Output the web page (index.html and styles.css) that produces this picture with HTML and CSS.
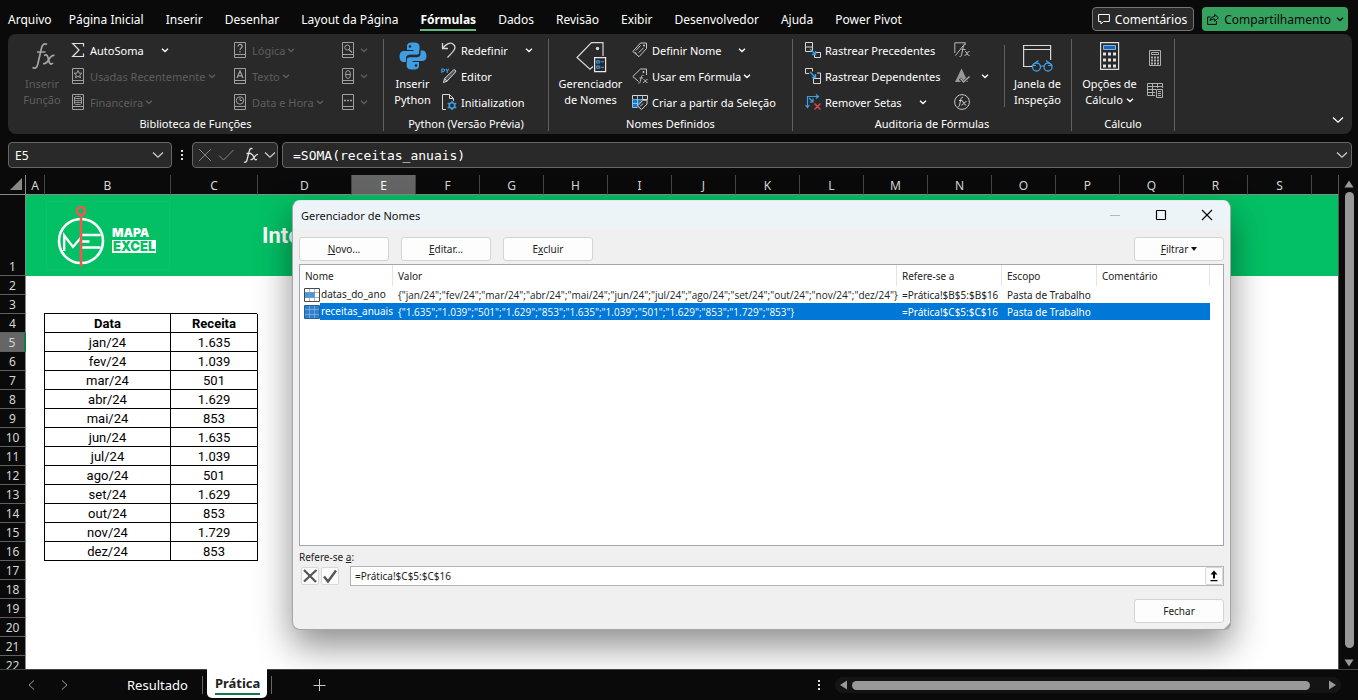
FILE: index.html
```html
<!DOCTYPE html>
<html lang="pt-BR">
<head>
    <meta charset="UTF-8">
    <meta name="viewport" content="width=device-width, initial-scale=1.0">
    <title>Gerenciador de Nomes</title>
    <link rel="stylesheet" href="styles.css">
</head>
<body>
    <svg class="defs" aria-hidden="true">
        <symbol id="chev" viewBox="0 0 8 8"><path d="M1 2.8l3 2.7 3-2.7" fill="none" stroke="currentColor" stroke-width="1.4"/></symbol>
        <symbol id="chev-lg" viewBox="0 0 12 12"><path d="M1 3.5l5 4.7 5-4.7" fill="none" stroke="currentColor" stroke-width="1.3"/></symbol>
        <symbol id="book" viewBox="0 0 16 16"><path d="M2.5.5h11v15h-11zM2.5 12.5h11" fill="none" stroke="currentColor"/></symbol>
        <symbol id="grid-icon" viewBox="0 0 16 14">
            <path d="M.5.5h15v13H.5z" fill="#fff"/>
            <path d="M1 4h10v6H1z" fill="#3d9be6"/>
            <path d="M1 4.500h14M1 9.500h14M5.500 1v12M10.500 1v12" stroke="#8d99a5" stroke-width=".7"/>
            <path d="M.5.5h15v13H.5z" fill="none" stroke="#4a4a4a"/>
        </symbol>
        <symbol id="grid-icon-sel" viewBox="0 0 16 14">
            <path d="M.5.5h15v13H.5z" fill="#2f80cc" stroke="#2b5f93"/>
            <path d="M1 4.500h14M1 9.500h14M5.500 1v12M10.500 1v12" stroke="#7fb0dd" stroke-width=".8"/>
        </symbol>
    </svg>

    <header class="topbar">
        <nav class="tabs">
            <a href="#" class="file">Arquivo</a>
            <a href="#">Página Inicial</a>
            <a href="#">Inserir</a>
            <a href="#">Desenhar</a>
            <a href="#">Layout da Página</a>
            <a href="#" class="active">Fórmulas</a>
            <a href="#">Dados</a>
            <a href="#">Revisão</a>
            <a href="#">Exibir</a>
            <a href="#">Desenvolvedor</a>
            <a href="#">Ajuda</a>
            <a href="#">Power Pivot</a>
        </nav>
        <div class="actions">
            <button class="comments"><svg class="i12" viewBox="0 0 12 12"><path d="M.6 1.500h10.800v7H5.500L3 11V8.500H.6z" fill="none" stroke="currentColor"/></svg>Comentários</button>
            <button class="share"><svg class="i12" viewBox="0 0 12 12"><path d="M3.500 4H.6v7.400h8.800V8M3 8c.4-3 2.200-4.400 4.700-4.400V1.400l3.700 3.400-3.700 3.300V6C5.700 6 4.300 6.500 3 8z" fill="none" stroke="currentColor"/></svg>Compartilhamento<svg class="i8"><use href="#chev"/></svg></button>
        </div>
    </header>

    <section class="ribbon">
        <div class="group library">
            <div class="tools">
                <button class="big off">
                    <svg class="i28" viewBox="0 0 28 28"><path d="M19 2.500c-2.500-1.600-4.600-.2-5.500 3.500L9.700 22.500C9 25.500 7.200 27 4.500 25.500M9 10h8.500M16 13.500c3-1.700 3.600 0 4.500 4s2 6 4.500 3.500M26.500 13.500c-3-.8-4.500 2-6 4.500-1.500 2.700-3 4.300-5.500 3.500" fill="none" stroke="#a5a5a5" stroke-width="1.700"/></svg>
                    <span>Inserir<br>Função</span>
                </button>
                <div class="col c1">
                    <button class="split"><svg class="i16" viewBox="0 0 16 16"><path d="M13.500 4.500V1.500H2.700L9 8l-6.300 6.500h10.800v-3" fill="none" stroke="#e0e0e0" stroke-width="1.200"/></svg>AutoSoma<svg class="i8"><use href="#chev"/></svg></button>
                    <button class="off"><svg class="i16" viewBox="0 0 16 16"><use href="#book"/><path d="M8 2.500l1.100 2.600 2.800.2-2.200 1.700.8 2.800L8 8.300 5.500 9.800l.8-2.800-2.200-1.700 2.800-.2z" fill="none" stroke="currentColor"/></svg><span>Usadas Recentemente</span><svg class="i8 dim"><use href="#chev"/></svg></button>
                    <button class="off"><svg class="i16" viewBox="0 0 16 16"><use href="#book"/><path d="M4.500 3.500C4.500 2 11.500 2 11.500 3.500v6c0 1.500-7 1.500-7 0zM4.500 3.500c0 1.500 7 1.500 7 0M4.500 5.500c0 1.500 7 1.500 7 0M4.500 7.500c0 1.500 7 1.500 7 0" fill="none" stroke="currentColor"/></svg><span>Financeira</span><svg class="i8 dim"><use href="#chev"/></svg></button>
                </div>
                <div class="col c2">
                    <button class="off"><svg class="i16" viewBox="0 0 16 16"><use href="#book"/><path d="M6 4.500c0-3 4.300-2.500 4.200 0C10.200 6 8 6 8 8M8 9v1.500" fill="none" stroke="currentColor" stroke-width="1.200"/></svg><span>Lógica</span><svg class="i8 dim"><use href="#chev"/></svg></button>
                    <button class="off"><svg class="i16" viewBox="0 0 16 16"><use href="#book"/><path d="M5 10l3-7 3 7M6 7.800h4" fill="none" stroke="currentColor" stroke-width="1.300"/></svg><span>Texto</span><svg class="i8 dim"><use href="#chev"/></svg></button>
                    <button class="off"><svg class="i16" viewBox="0 0 16 16"><use href="#book"/><circle cx="8" cy="6.500" r="3.700" fill="none" stroke="currentColor"/><path d="M8 4v2.500h2.200" fill="none" stroke="currentColor"/></svg><span>Data e Hora</span><svg class="i8 dim"><use href="#chev"/></svg></button>
                </div>
                <div class="col c3">
                    <button class="off" aria-label="Pesquisa e Referência"><svg class="i16" viewBox="0 0 16 16"><use href="#book"/><circle cx="7.300" cy="5.500" r="2.500" fill="none" stroke="currentColor"/><path d="M9 7.500l3 3" stroke="currentColor" stroke-width="1.200"/></svg><svg class="i8 dim"><use href="#chev"/></svg></button>
                    <button class="off" aria-label="Matemática"><svg class="i16" viewBox="0 0 16 16"><use href="#book"/><ellipse cx="8" cy="6.500" rx="2.500" ry="4" fill="none" stroke="currentColor"/><path d="M5.500 6.500h5" stroke="currentColor"/></svg><svg class="i8 dim"><use href="#chev"/></svg></button>
                    <button class="off" aria-label="Mais Funções"><svg class="i16" viewBox="0 0 16 16"><use href="#book"/><path d="M4 6.500h2M7 6.500h2M10 6.500h2" stroke="currentColor" stroke-width="1.500"/></svg><svg class="i8 dim"><use href="#chev"/></svg></button>
                </div>
            </div>
            <div class="caption">Biblioteca de Funções</div>
        </div>

        <div class="group python">
            <div class="tools">
                <button class="big">
                    <svg class="i28" viewBox="0 0 28 28"><path d="M14 .5c-5 0-6 1.500-6 4V8h6.500v1H5C2 9 .5 11 .5 14.500S2 20 4.500 20H7v-3.500C7 14 8.500 13 11 13h6.500c2 0 3-1.300 3-3V4.500c0-2.500-1.500-4-6.500-4z" fill="#3f9ee2"/><path d="M14 27.500c5 0 6-1.500 6-4V20h-6.500v-1H23c3 0 4.500-1.500 4.500-5S26 8.500 23.500 8.500h-2V12c0 2.500-1.500 3.200-4 3.200H11c-2 0-3.300 1-3.300 3v5.300c0 2.500 1.300 4 6.300 4z" fill="#3f9ee2"/><circle cx="11" cy="4.500" r="1.300" fill="#292929"/><circle cx="17" cy="23.500" r="1.300" fill="#292929"/><path d="M7.500 20v-3.500c0-2.300 1.400-3.400 3.500-3.400h6.500c2 0 3.300-1.200 3.300-3.100V8" fill="none" stroke="#292929" stroke-width=".9"/></svg>
                    <span>Inserir<br>Python</span>
                </button>
                <div class="col">
                    <button class="split"><svg class="i16" viewBox="0 0 16 16"><path d="M1.500 1v5.500H7M1.800 6.200C5 2 9.500-.5 12.500 2.500c3.500 3.300.5 6.500-6 13" fill="none" stroke="#d8d8d8" stroke-width="1.300"/></svg>Redefinir<svg class="i8"><use href="#chev"/></svg></button>
                    <button><svg class="i16" viewBox="0 0 16 16"><path d="M.8 5V1h1.600c1.500 0 1.500 2.200 0 2.200H1M4.800.8l1.500 2L7.800.8M6.300 2.800V5" fill="none" stroke="#3f9ee2" stroke-width="1.100"/><path d="M2.500 14.500l1-4L12.500 2c1-1 3 .8 2 2L6 13.200zM3.500 10.500L6 13.200" fill="#555" stroke="#d8d8d8"/></svg>Editor</button>
                    <button><svg class="i16" viewBox="0 0 16 16"><path d="M5 15.500H1.500V.5h7l4 4V7M8.500.5v4h4" fill="none" stroke="#d8d8d8"/><circle cx="11" cy="11.500" r="2.700" fill="none" stroke="#3f9ee2" stroke-width="1.600"/><path d="M11 7v2M11 14v2M6.800 9.200l1.700 1M13.500 12.800l1.700 1M6.800 13.800l1.700-1M13.500 10.200l1.700-1" stroke="#3f9ee2" stroke-width="1.500"/></svg>Initialization</button>
                </div>
            </div>
            <div class="caption">Python (Versão Prévia)</div>
        </div>

        <div class="group names">
            <div class="tools">
                <button class="big">
                    <svg class="i30" viewBox="0 0 30 30"><path d="M17 24.500l-3 2.800L1 15.500 15.500.7H27V14" fill="none" stroke="#d8d8d8" stroke-width="1.200"/><circle cx="21.500" cy="6.500" r="1.700" fill="#d8d8d8"/><path d="M18.600 15.600h11v14h-11z" fill="#292929" stroke="#e8e8e8" stroke-width="1.200"/><path d="M20.700 18.700h2.500v2.300h-2.500zM20.700 24h2.500v2.300h-2.500zM24.500 19.800h3.500M24.500 25.200h3.500" fill="none" stroke="#3f9ee2" stroke-width="1.100"/></svg>
                    <span>Gerenciador<br>de Nomes</span>
                </button>
                <div class="col">
                    <button class="split"><svg class="i16" viewBox="0 0 16 16"><path d="M.8 9.500L8.500 1h6v5.500L7 14.700zM4 8.500l4.500-5M6.500 10.800l5-5M2.500 9.800l2 2" fill="none" stroke="#c8c8c8"/><circle cx="12" cy="3.500" r=".9" fill="#ddd"/></svg>Definir Nome<svg class="i8"><use href="#chev"/></svg></button>
                    <button><svg class="i16" viewBox="0 0 16 16"><path d="M6.500 13.500L.8 8.500 8.500 1h6v6" fill="none" stroke="#c8c8c8"/><circle cx="11.500" cy="4" r=".9" fill="#ddd"/><path d="M11.500 7.500c-1.500-.8-2 .5-2.500 3l-.7 3c-.3 1.500-1 2-2 1.500M7.500 10h3.500M11.500 11.500c2-.5 1.500 3.500 4 3M15.500 11.500c-2-.5-2.500 3.500-4.500 3" fill="none" stroke="#b8b8b8"/></svg>Usar em Fórmula<svg class="i8"><use href="#chev"/></svg></button>
                    <button><svg class="i16" viewBox="0 0 16 16"><path d="M.5 1.500h15v4H.5z" fill="none" stroke="#d8d8d8"/><path d="M.5 5.500h10v4h-4v4h-6z" fill="#1c74c4"/><path d="M.5 5.500v8h5M.5 9.500h6M5.500 1.500v10M10.500 1.500v4" fill="none" stroke="#8fc0ec"/><path d="M5.500 12L11 6.200h4v4L9.500 15.500z" fill="#292929" stroke="#d8d8d8"/><path d="M8 12.500l3-3" stroke="#d8d8d8"/></svg>Criar a partir da Seleção</button>
                </div>
            </div>
            <div class="caption">Nomes Definidos</div>
        </div>

        <div class="group audit">
            <div class="tools">
                <div class="col c1">
                    <button><svg class="i16" viewBox="0 0 16 16"><path d="M.5.5h7v9h-7zM.5 5h7M11 10.500h4.500v5H9.500v-2.500" fill="none" stroke="#d8d8d8"/><path d="M5 7l5.500 5.500M10.500 9v3.500H7" fill="none" stroke="#3f9ee2" stroke-width="1.400"/></svg>Rastrear Precedentes</button>
                    <button><svg class="i16" viewBox="0 0 16 16"><path d="M.5 5.500v-5h7v3M.5 5.500H4M12 5h3.500v10.500h-7v-5h7" fill="none" stroke="#d8d8d8"/><path d="M5 4l5.500 5.500M10.500 6v3.500H7" fill="none" stroke="#3f9ee2" stroke-width="1.400"/></svg>Rastrear Dependentes</button>
                    <button class="split"><svg class="i16" viewBox="0 0 16 16"><path d="M2.500 13V2.500H13M11 .5l2.500 2-2.500 2M.5 11l2 2.500 2-2.500M4 4l4 4M8 4.500V8H4.500" fill="none" stroke="#3f9ee2" stroke-width="1.200"/><path d="M9.500 9.500l6 6M15.500 9.500l-6 6" stroke="#d9484d" stroke-width="1.500"/></svg>Remover Setas<svg class="i8"><use href="#chev"/></svg></button>
                </div>
                <div class="col c2">
                    <button aria-label="Mostrar Fórmulas"><svg class="i16" viewBox="0 0 16 16"><path d="M.8 11V.8h10.700L1.500 13.500M12 2.500c-1.500-.8-2.300.3-3 3.500l-1.500 7c-.3 1.500-1 2-2 1.500M7.500 7.500h4M11 9.500c2.500-.5 1.500 4.500 4.500 4M15.500 9.500c-2-.5-3 4.500-5 4" fill="none" stroke="#b8b8b8"/></svg></button>
                    <button aria-label="Verificação de Erros"><svg class="i16" viewBox="0 0 16 16"><path d="M7.500.5L14 14H1z" fill="#999"/><path d="M6 10.500l3.500 4 6-6" fill="none" stroke="#292929" stroke-width="3"/><path d="M6.500 10.500l3.200 3.500 5.800-5.500" fill="none" stroke="#aaa" stroke-width="1.400"/></svg><svg class="i8 far"><use href="#chev"/></svg></button>
                    <button aria-label="Avaliar Fórmula"><svg class="i16" viewBox="0 0 16 16"><circle cx="8" cy="8" r="7.400" fill="none" stroke="#c8c8c8"/><path d="M9 3.500c-1.200-.6-2 .3-2.400 2.500l-1 5c-.3 1.500-1 1.800-1.800 1.500M5 6.500h3.500M8 7.500c2.500-.5 1.500 4 4.300 3.500M12.500 7.500c-2-.5-3 4-5 3.500" fill="none" stroke="#c8c8c8"/></svg></button>
                </div>
                <button class="big watch">
                    <svg class="i30" viewBox="0 0 30 30"><path d="M10 24.500H.6V3.500h27V18M.6 7.500h27" fill="none" stroke="#d8d8d8" stroke-width="1.200"/><circle cx="13.500" cy="25" r="4" fill="none" stroke="#3f9ee2" stroke-width="1.300"/><circle cx="25" cy="25" r="4" fill="none" stroke="#3f9ee2" stroke-width="1.300"/><path d="M8.500 23.500H13M17.500 24h4M29.500 23.500H25M9.500 23l6-4.500M29 23l-6-4.500" fill="none" stroke="#3f9ee2" stroke-width="1.200"/></svg>
                    <span>Janela de<br>Inspeção</span>
                </button>
            </div>
            <div class="caption">Auditoria de Fórmulas</div>
        </div>

        <div class="group calc">
            <div class="tools">
                <button class="big">
                    <svg class="i28" viewBox="0 0 28 28"><path d="M4.600.6h18v26.800h-18z" fill="none" stroke="#e0e0e0" stroke-width="1.200"/><path d="M7.500 3.500h12v4h-12z" fill="#1769b5" stroke="#7db8ea"/><path d="M7 12h13M7 18h13M7 24h13" stroke="#e0e0e0" stroke-width="3" stroke-dasharray="3 2"/></svg>
                    <span>Opções de<br>Cálculo <svg class="i8"><use href="#chev"/></svg></span>
                </button>
                <div class="col pair">
                    <button aria-label="Calcular Agora"><svg class="i16" viewBox="0 0 16 16"><path d="M2.500.5h11v15h-11zM4.500 2.500h7v2h-7z" fill="none" stroke="#b0b0b0"/><path d="M4 7.500h8M4 10.500h8M4 13.500h8" stroke="#b0b0b0" stroke-width="2" stroke-dasharray="2 1"/></svg></button>
                    <button aria-label="Calcular Planilha"><svg class="i16" viewBox="0 0 16 16"><path d="M8 13.500H.5v-12h15V6M.5 4.500h15M.5 7.500H9M.5 10.500H8M5.500 1.500v12M10.500 1.500V6" fill="none" stroke="#b0b0b0"/><path d="M9.500 7.500h6v8h-6z" fill="#292929" stroke="#b0b0b0"/><path d="M11 9.500h3M11 11.500h3M11 13.500h3" stroke="#b0b0b0"/></svg></button>
                </div>
            </div>
            <div class="caption">Cálculo</div>
        </div>
        <button class="collapse" aria-label="Recolher"><svg class="i12"><use href="#chev-lg"/></svg></button>
    </section>

    <section class="formula-bar">
        <div class="field name-box">
            <input type="text" value="E5" aria-label="Caixa de nome">
            <button aria-label="Nomes"><svg class="i12"><use href="#chev-lg"/></svg></button>
        </div>
        <div class="dots"><i></i><i></i><i></i></div>
        <div class="field fx-box">
            <button aria-label="Cancelar"><svg class="i16" viewBox="0 0 16 16"><path d="M2 2l12 12M14 2L2 14" stroke="#858585"/></svg></button>
            <button aria-label="Inserir"><svg class="i16" viewBox="0 0 16 16"><path d="M1 8.500L5.500 13 15.500 3" fill="none" stroke="#858585"/></svg></button>
            <button class="fx" aria-label="Inserir função"><svg class="i16" viewBox="0 0 16 16"><path d="M9.500 2C8 .8 6.800 1.600 6.300 4L4 13c-.5 2-1.600 2.600-3 2M3.500 6.500h5M8 7.500c3-1.500 2.500 7.500 6 4.700M15 7.500c-3-1-4.500 6.500-7.500 5" fill="none" stroke="#e0e0e0" stroke-width="1.300"/></svg></button>
            <button aria-label="Funções"><svg class="i12"><use href="#chev-lg"/></svg></button>
        </div>
        <div class="field formula">
            <input type="text" value="=SOMA(receitas_anuais)" aria-label="Barra de fórmulas">
            <button aria-label="Expandir"><svg class="i12"><use href="#chev-lg"/></svg></button>
        </div>
    </section>

    <main class="workbook">
        <div class="sheet">
            <table class="cells">
                <colgroup>
                    <col class="w-row"><col class="w-a"><col class="w-b"><col class="w-c"><col class="w-d">
                    <col class="w-n"><col class="w-n"><col class="w-n"><col class="w-n"><col class="w-n"><col class="w-n"><col class="w-n"><col class="w-n">
                    <col class="w-n"><col class="w-n"><col class="w-n"><col class="w-n"><col class="w-n"><col class="w-n"><col class="w-n"><col>
                </colgroup>
                <thead>
                    <tr><th class="corner"><svg viewBox="0 0 12 12"><path d="M12 0v12H0z" fill="#8a8a8a"/></svg></th><th>A</th><th>B</th><th>C</th><th>D</th><th class="on">E</th><th>F</th><th>G</th><th>H</th><th>I</th><th>J</th><th>K</th><th>L</th><th>M</th><th>N</th><th>O</th><th>P</th><th>Q</th><th>R</th><th>S</th><th></th></tr>
                </thead>
                <tbody>
                    <tr class="first">
                        <th>1</th>
                        <td colspan="20">
                            <div class="banner">
                                <div class="logo">
                                    <svg viewBox="0 0 50 64">
                                        <circle cx="25" cy="37" r="22" fill="none" stroke="#fff" stroke-width="2.600"/>
                                        <path d="M8.200 47V31.500L17 43l8-9.500M25 31h19.500M25 37.500h8.500M25 43.500h19.500" fill="none" stroke="#fff" stroke-width="2.300"/>
                                        <path d="M25 11v52" stroke="#f4564f" stroke-width="2.600"/>
                                        <circle cx="25" cy="7" r="4" fill="none" stroke="#f4564f" stroke-width="2.600"/>
                                    </svg>
                                    <div class="logo-name"><span>MAPA</span><b>EXCEL</b></div>
                                </div>
                                <h1>Inte</h1>
                            </div>
                        </td>
                    </tr>
                    <tr><th>2</th><td colspan="20"></td></tr>
                    <tr class="head-edge"><th>3</th><td></td><td></td><td></td><td colspan="17"></td></tr>
                    <tr class="data title"><th>4</th><td></td><td>Data</td><td>Receita</td><td colspan="17"></td></tr>
                    <tr class="data on"><th>5</th><td></td><td>jan/24</td><td>1.635</td><td colspan="17"></td></tr>
                    <tr class="data"><th>6</th><td></td><td>fev/24</td><td>1.039</td><td colspan="17"></td></tr>
                    <tr class="data"><th>7</th><td></td><td>mar/24</td><td>501</td><td colspan="17"></td></tr>
                    <tr class="data"><th>8</th><td></td><td>abr/24</td><td>1.629</td><td colspan="17"></td></tr>
                    <tr class="data"><th>9</th><td></td><td>mai/24</td><td>853</td><td colspan="17"></td></tr>
                    <tr class="data"><th>10</th><td></td><td>jun/24</td><td>1.635</td><td colspan="17"></td></tr>
                    <tr class="data"><th>11</th><td></td><td>jul/24</td><td>1.039</td><td colspan="17"></td></tr>
                    <tr class="data"><th>12</th><td></td><td>ago/24</td><td>501</td><td colspan="17"></td></tr>
                    <tr class="data"><th>13</th><td></td><td>set/24</td><td>1.629</td><td colspan="17"></td></tr>
                    <tr class="data"><th>14</th><td></td><td>out/24</td><td>853</td><td colspan="17"></td></tr>
                    <tr class="data"><th>15</th><td></td><td>nov/24</td><td>1.729</td><td colspan="17"></td></tr>
                    <tr class="data"><th>16</th><td></td><td>dez/24</td><td>853</td><td colspan="17"></td></tr>
                    <tr><th>17</th><td colspan="20"></td></tr>
                    <tr><th>18</th><td colspan="20"></td></tr>
                    <tr><th>19</th><td colspan="20"></td></tr>
                    <tr><th>20</th><td colspan="20"></td></tr>
                    <tr><th>21</th><td colspan="20"></td></tr>
                    <tr><th>22</th><td colspan="20"></td></tr>
                </tbody>
            </table>

            <div class="dialog" role="dialog" aria-labelledby="dlgTitle">
                <div class="dialog-title">
                    <span id="dlgTitle">Gerenciador de Nomes</span>
                    <div class="win-buttons">
                        <button aria-label="Minimizar"><svg class="i12" viewBox="0 0 12 12"><path d="M1 6.500h10" stroke="#b4b8ba"/></svg></button>
                        <button aria-label="Maximizar"><svg class="i12" viewBox="0 0 12 12"><rect x="1.500" y="1.500" width="9" height="9" rx=".5" fill="none" stroke="#000" stroke-width="1.200"/></svg></button>
                        <button aria-label="Fechar janela"><svg class="i12" viewBox="0 0 12 12"><path d="M1 1l10 10M11 1L1 11" stroke="#000" stroke-width="1.100"/></svg></button>
                    </div>
                </div>
                <div class="dialog-body">
                    <div class="dialog-tools">
                        <button class="btn"><span><u>N</u>ovo...</span></button>
                        <button class="btn"><span><u>E</u>ditar...</span></button>
                        <button class="btn"><span>E<u>x</u>cluir</span></button>
                        <button class="btn filter"><span><u>F</u>iltrar</span><svg class="i6" viewBox="0 0 6 6"><path d="M0 1h6L3 5z" fill="#111"/></svg></button>
                    </div>
                    <div class="list">
                        <table>
                            <colgroup><col class="n1"><col class="n2"><col class="n3"><col class="n4"><col class="n5"><col></colgroup>
                            <thead>
                                <tr><th>Nome</th><th>Valor</th><th>Refere-se a</th><th>Escopo</th><th>Comentário</th><th></th></tr>
                            </thead>
                            <tbody>
                                <tr>
                                    <td><div class="nm"><svg><use href="#grid-icon"/></svg><span>datas_do_ano</span></div></td>
                                    <td class="value">{"jan/24";"fev/24";"mar/24";"abr/24";"mai/24";"jun/24";"jul/24";"ago/24";"set/24";"out/24";"nov/24";"dez/24"}</td>
                                    <td>=Prática!$B$5:$B$16</td><td>Pasta de Trabalho</td><td></td><td></td>
                                </tr>
                                <tr class="selected">
                                    <td><div class="nm"><svg><use href="#grid-icon-sel"/></svg><span>receitas_anuais</span></div></td>
                                    <td class="value">{"1.635";"1.039";"501";"1.629";"853";"1.635";"1.039";"501";"1.629";"853";"1.729";"853"}</td>
                                    <td>=Prática!$C$5:$C$16</td><td>Pasta de Trabalho</td><td></td><td></td>
                                </tr>
                            </tbody>
                        </table>
                    </div>
                    <label for="refersTo">Refere-se <u>a</u>:</label>
                    <div class="refers">
                        <button class="mini" aria-label="Descartar"><svg class="i16" viewBox="0 0 16 16"><path d="M2 2l12 12M14.500 2L2 13.500" fill="none" stroke="#555" stroke-width="2.200"/></svg></button>
                        <button class="mini" aria-label="Confirmar"><svg class="i16" viewBox="0 0 16 16"><path d="M2 8.500l4 5L14 2.500" fill="none" stroke="#555" stroke-width="2.400"/></svg></button>
                        <div class="refers-field">
                            <input type="text" id="refersTo" value="=Prática!$C$5:$C$16">
                            <button class="mini" aria-label="Recolher caixa"><svg class="i12" viewBox="0 0 12 12"><path d="M6 .5l3.500 4h-2.500v4H5v-4H2.500zM2.500 10h7v1.300h-7z" fill="#000"/></svg></button>
                        </div>
                    </div>
                    <div class="dialog-foot"><button class="btn">Fechar</button></div>
                </div>
                <svg class="grip" viewBox="0 0 8 8"><path d="M8 0v2a6 6 0 0 1-6 6H0z" fill="#a6a6a6"/></svg>
            </div>
        </div>
        <div class="vscroll">
            <svg class="i12" viewBox="0 0 12 12"><path d="M6 2.500l4.500 7h-9z" fill="#9a9a9a"/></svg>
            <div class="thumb"></div>
            <svg class="i12" viewBox="0 0 12 12"><path d="M6 9.500l4.500-7h-9z" fill="#9a9a9a"/></svg>
        </div>
    </main>

    <footer class="bottom">
        <button aria-label="Planilha anterior"><svg class="i12" viewBox="0 0 12 12"><path d="M8 1.500L3 6l5 4.500" fill="none" stroke="#9a9a9a"/></svg></button>
        <button aria-label="Próxima planilha"><svg class="i12" viewBox="0 0 12 12"><path d="M4 1.500L9 6l-5 4.500" fill="none" stroke="#9a9a9a"/></svg></button>
        <a href="#" class="sheet-tab">Resultado</a>
        <a href="#" class="sheet-tab current"><span>Prática</span></a>
        <button class="add" aria-label="Nova planilha"><svg class="i12" viewBox="0 0 12 12"><path d="M6.500 0v12M.5 6.500h12" stroke="#c8c8c8"/></svg></button>
        <div class="dots"><i></i><i></i><i></i></div>
        <div class="hscroll">
            <svg class="i12" viewBox="0 0 12 12"><path d="M2 6l7-4.500v9z" fill="#9a9a9a"/></svg>
            <div class="thumb"></div>
            <svg class="i12" viewBox="0 0 12 12"><path d="M10 6L3 1.500v9z" fill="#9a9a9a"/></svg>
        </div>
    </footer>
</body>
</html>
```
FILE: styles.css
```css
* {
    box-sizing: border-box;
}
body {
    margin: 0;
    height: 100vh;
    display: flex;
    flex-direction: column;
    overflow: hidden;
    background: #0a0a0a;
    color: #fff;
    font-family: "Noto Sans", "Open Sans", sans-serif;
    font-size: 12px;
}
button, input {
    font: inherit;
    color: inherit;
    background: none;
    border: none;
    padding: 0;
    margin: 0;
    outline: none;
}
button {
    display: flex;
    align-items: center;
    justify-content: center;
    white-space: nowrap;
}
a {
    color: inherit;
    text-decoration: none;
}
svg {
    flex: none;
    overflow: visible;
}
.defs {
    position: absolute;
    width: 0;
    height: 0;
}
.i6 { width: 6px; height: 6px; }
.i8 { width: 8px; height: 8px; }
.i12 { width: 12px; height: 12px; }
.i16 { width: 16px; height: 16px; }
.i28 { width: 28px; height: 28px; }
.i30 { width: 30px; height: 30px; }

/* menu */
.topbar {
    display: flex;
    justify-content: space-between;
    height: 34px;
    padding: 7px 10px 3px 8px;
}
.tabs {
    display: flex;
    gap: 22px;
    line-height: 25px;
    white-space: nowrap;
}
.tabs .file {
    margin-right: -5px;
}
.tabs .active {
    font-weight: bold;
    border-bottom: 2px solid #63b883;
}
.actions {
    display: flex;
    gap: 8px;
}
.actions button {
    height: 24px;
    gap: 5px;
    border-radius: 4px;
}
.comments {
    padding: 0 6px 0 5px;
    background: #292929;
    border: 1px solid #757575;
}
.share {
    padding: 0 4px 0 5px;
    background: #35a35f;
    color: #0a0a0a;
}

/* ribbon */
.ribbon {
    display: flex;
    margin: 0 6px 0 8px;
    padding: 3px 0 0;
    height: 100px;
    background: #292929;
    border-radius: 8px;
    font-size: 11px;
}
.group {
    display: flex;
    flex-direction: column;
    height: 92px;
    margin-top: 2px;
    border-right: 1px solid #606060;
}
.group .tools {
    display: flex;
    margin-top: -2px;
}
.caption {
    text-align: center;
    line-height: 18px;
}
.col {
    display: flex;
    flex-direction: column;
    align-items: flex-start;
}
.col button {
    height: 26px;
    gap: 4px;
}
.col button .i8 {
    margin-left: -2px;
}
.col .split .i8 {
    margin-left: 13px;
}
.off {
    color: #a0a0a0;
}
.off span, .off .dim {
    color: #5e5e5e;
}
.col.c3 button .i8 {
    margin-left: 0;
}
.big {
    flex-direction: column;
    justify-content: flex-start;
    height: 78px;
    padding-top: 5px;
    line-height: 16px;
}
.big .i28 {
    margin-bottom: 6px;
}
.big .i30 {
    margin-bottom: 4px;
}
.library { width: 376px; }
.library .big { width: 56px; margin-left: 6px; }
.library .c1 { width: 162px; }
.library .c2 { width: 108px; }
.python { width: 165px; }
.python .big { width: 57px; }
.names { width: 244px; }
.names .big { width: 83px; }
.audit { width: 279px; }
.audit .c1 { width: 149px; margin-left: 12px; }
.audit .c2 { width: 50px; }
.audit .c2 .far { margin-left: 7px; }
.audit .watch {
    width: 67px;
    position: relative;
}
.audit .watch::before {
    content: "";
    position: absolute;
    left: 0;
    top: 8px;
    height: 62px;
    border-left: 1px solid #606060;
}
.calc { width: 103px; }
.calc .big { width: 75px; }
.calc .pair { gap: 6px; padding-top: 8px; }

.collapse {
    margin: auto 8px 8px auto;
}

/* formula bar */
.formula-bar {
    display: flex;
    gap: 4px;
    margin: 8px 6px 7px 8px;
}
.field {
    display: flex;
    align-items: center;
    height: 26px;
    background: #292929;
    border: 1px solid #666;
    border-radius: 4px;
    color: #ccc;
}
.field input {
    flex: 1;
    min-width: 0;
    color: #fff;
}
.name-box {
    width: 164px;
    padding: 0 7px 0 6px;
}
.dots {
    display: flex;
    flex-direction: column;
    justify-content: center;
    align-items: center;
    gap: 2px;
    width: 12px;
}
.dots i {
    width: 2px;
    height: 2px;
    background: #ddd;
}
.fx-box {
    width: 86px;
    justify-content: space-between;
    padding: 0 1px 0 4px;
}
.fx-box .fx {
    margin-left: 4px;
}
.formula {
    flex: 1;
    padding: 0 3px 0 10px;
}
.formula input {
    font-family: "DejaVu Sans Mono", monospace;
    font-size: 13px;
}

/* sheet */
.workbook {
    flex: 1;
    min-height: 0;
    display: flex;
}
.sheet {
    flex: 1;
    position: relative;
    overflow: hidden;
    background: #fff;
}
.cells {
    width: 100%;
    table-layout: fixed;
    border-collapse: separate;
    border-spacing: 0;
    font-family: Roboto, sans-serif;
    font-size: 13px;
    color: #000;
}
.cells th, .cells td {
    padding: 1px 0 0;
    height: 19px;
    line-height: 17px;
    text-align: center;
}
.w-row { width: 26px; }
.w-a { width: 18px; }
.w-b { width: 126px; }
.w-c { width: 87px; }
.w-d { width: 94px; }
.w-n { width: 64px; }
.cells th {
    background: #0a0a0a;
    color: #d6d6d6;
    font-weight: normal;
    font-family: "Noto Sans", sans-serif;
    font-size: 12px;
}
.cells thead th {
    height: 20px;
    border-left: 1px solid #454545;
    border-bottom: 1px solid #8a8a8a;
}
.cells thead .corner {
    border-left: none;
    border-right: 1px solid #8a8a8a;
    padding-right: 3px;
    text-align: right;
}
.corner svg {
    width: 12px;
    height: 12px;
}
.cells thead th:nth-child(2) {
    border-left: none;
}
.cells thead .on {
    background: #666;
    color: #fff;
}
.cells tbody th {
    border-right: 1px solid #8a8a8a;
    border-bottom: 1px solid #606060;
}
.cells tbody .on th {
    background: #666;
    border-right: 2px solid #107c41;
}
.cells .first th {
    height: 81px;
    vertical-align: bottom;
}
.cells .first td {
    padding: 0;
}
.banner {
    display: flex;
    align-items: center;
    height: 81px;
    background: #03c064;
    color: #fff;
}
.logo {
    display: flex;
    align-items: center;
    gap: 6px;
    width: 124px;
    height: 69px;
    margin-left: 20px;
    padding-left: 9px;
    border: 1px solid #0bc469;
}
.logo svg {
    width: 50px;
    height: 64px;
}
.logo-name {
    display: flex;
    flex-direction: column;
    align-items: flex-start;
    gap: 1px;
    padding-top: 7px;
    font-family: Inter, sans-serif;
    font-size: 12px;
    font-weight: 900;
    line-height: 13px;
}
.logo-name b {
    padding: 0 1px;
    background: #fff;
    color: #03c064;
    font-size: 13px;
    font-weight: 900;
}
.banner h1 {
    margin: 0 0 0 92px;
    font-size: 22px;
    line-height: 30px;
}
.head-edge td:nth-child(3), .head-edge td:nth-child(4),
.data td:nth-child(3), .data td:nth-child(4) {
    border-bottom: 1px solid #000;
}
.data td:nth-child(3), .data td:nth-child(4), .data td:nth-child(5) {
    border-left: 1px solid #000;
}
.title td {
    font-weight: bold;
}

/* scroll bars */
.vscroll {
    display: flex;
    flex-direction: column;
    align-items: center;
    gap: 2px;
    width: 20px;
    padding: 3px 0 0 1px;
    border-left: 1px solid #555;
}
.thumb {
    flex: 1;
    background: #999;
    border-radius: 5px;
}
.vscroll .thumb {
    width: 9px;
    margin-bottom: 7px;
}
.hscroll {
    display: flex;
    align-items: center;
    gap: 2px;
    width: 506px;
    height: 16px;
    margin-right: 17px;
    padding: 0 3px 0 3px;
    border-radius: 8px;
    background: #141414;
}
.hscroll .thumb {
    height: 9px;
    margin-right: 14px;
}

/* bottom bar */
.bottom {
    display: flex;
    align-items: center;
    height: 31px;
    padding-left: 26px;
    border-top: 1px solid #444;
}
.bottom button {
    margin-right: 20px;
}
.bottom .sheet-tab {
    margin-left: 37px;
    padding-right: 14px;
    font-size: 13px;
    line-height: 18px;
    border-right: 1px solid #666;
}
.bottom .current {
    align-self: stretch;
    display: flex;
    align-items: flex-start;
    margin: -1px 0 2px 4px;
    padding: 4px 7px 0 8px;
    background: #fff;
    color: #222;
    border: none;
    border-radius: 0 0 5px 5px;
    font-weight: bold;
}
.current span {
    line-height: 20px;
    border-bottom: 2px solid #107c41;
}
.bottom .add {
    margin: 0 auto 0 4px;
    padding-left: 41px;
    height: 18px;
    border-left: 1px solid #666;
}
.bottom .dots {
    margin-right: 10px;
}

/* name manager */
.dialog {
    position: absolute;
    left: 292px;
    top: 25px;
    width: 939px;
    background: #f0f0f0;
    border: 1px solid #a6a6a6;
    border-top-color: #dfe8ec;
    border-radius: 8px;
    color: #222;
    font-size: 10px;
    box-shadow: 0 16px 36px rgba(0, 0, 0, 0.45);
}
.dialog-title {
    display: flex;
    align-items: center;
    justify-content: space-between;
    height: 28px;
    padding: 0 17px 0 8px;
    background: #ecf4f8;
    border-radius: 7px 7px 0 0;
    color: #111;
    font-size: 11px;
}
.win-buttons {
    display: flex;
    gap: 34px;
}
.dialog-body {
    display: flex;
    flex-direction: column;
    padding: 8px 6px 6px;
}
.dialog-tools {
    display: flex;
    gap: 12px;
}
.btn {
    width: 90px;
    height: 24px;
    gap: 3px;
    background: #fdfdfd;
    border: 1px solid #d4d4d4;
    border-radius: 3px;
}
.filter {
    margin-left: auto;
}
.list {
    height: 282px;
    margin-top: 3px;
    background: #fff;
    border: 1px solid #a3a7b0;
}
.list table {
    width: 100%;
    table-layout: fixed;
    border-collapse: separate;
    border-spacing: 0;
    white-space: nowrap;
}
.list th, .list td {
    padding: 0 0 0 5px;
    height: 17px;
    line-height: 16px;
    text-align: left;
    font-weight: normal;
}
.list th {
    height: 21px;
    border-right: 1px solid #e4e4e4;
}
.list th:last-child {
    border: none;
}
.list .value {
    font-family: "Open Sans", sans-serif;
}
.n1 { width: 93px; }
.n2 { width: 504px; }
.n3 { width: 105px; }
.n4 { width: 95px; }
.n5 { width: 113px; }
.nm {
    display: flex;
    align-items: center;
    margin-left: -1px;
}
.nm svg {
    width: 16px;
    height: 14px;
}
.nm span {
    flex: 1;
    padding-left: 1px;
    line-height: 17px;
}
.selected td, .selected .nm span {
    background: #0078d7;
    color: #fff;
}
.selected td:first-child, .selected td:last-child {
    background: none;
}
.dialog label {
    margin-top: 3px;
    line-height: 16px;
}
.refers {
    display: flex;
    align-items: center;
    gap: 2px;
    margin-top: 1px;
    padding-left: 2px;
}
.mini {
    width: 18px;
    height: 18px;
    background: #fbfbfb;
    border: 1px solid #d8d8d8;
    border-radius: 2px;
}
.refers-field {
    flex: 1;
    display: flex;
    align-items: center;
    height: 20px;
    margin-left: 9px;
    padding-left: 4px;
    background: #fff;
    border: 1px solid #b4b4b8;
}
.refers-field input {
    flex: 1;
}
.dialog-foot {
    display: flex;
    justify-content: flex-end;
    margin-top: 13px;
}
.grip {
    position: absolute;
    right: -1px;
    bottom: -1px;
    width: 8px;
    height: 8px;
}
```
